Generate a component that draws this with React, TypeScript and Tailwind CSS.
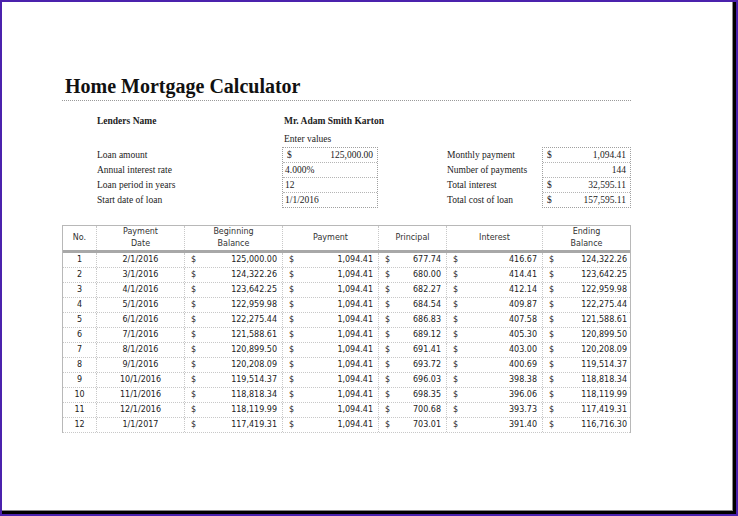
import React from "react";

const rows: [string, string, string, string, string, string, string][] = [
  ["1", "2/1/2016", "125,000.00", "1,094.41", "677.74", "416.67", "124,322.26"],
  ["2", "3/1/2016", "124,322.26", "1,094.41", "680.00", "414.41", "123,642.25"],
  ["3", "4/1/2016", "123,642.25", "1,094.41", "682.27", "412.14", "122,959.98"],
  ["4", "5/1/2016", "122,959.98", "1,094.41", "684.54", "409.87", "122,275.44"],
  ["5", "6/1/2016", "122,275.44", "1,094.41", "686.83", "407.58", "121,588.61"],
  ["6", "7/1/2016", "121,588.61", "1,094.41", "689.12", "405.30", "120,899.50"],
  ["7", "8/1/2016", "120,899.50", "1,094.41", "691.41", "403.00", "120,208.09"],
  ["8", "9/1/2016", "120,208.09", "1,094.41", "693.72", "400.69", "119,514.37"],
  ["9", "10/1/2016", "119,514.37", "1,094.41", "696.03", "398.38", "118,818.34"],
  ["10", "11/1/2016", "118,818.34", "1,094.41", "698.35", "396.06", "118,119.99"],
  ["11", "12/1/2016", "118,119.99", "1,094.41", "700.68", "393.73", "117,419.31"],
  ["12", "1/1/2017", "117,419.31", "1,094.41", "703.01", "391.40", "116,716.30"],
];

const leftLabels = ["Loan amount", "Annual interest rate", "Loan period in years", "Start date of loan"];
const rightLabels = ["Monthly payment", "Number of payments", "Total interest", "Total cost of loan"];

function Money({ v }: { v: string }) {
  return (
    <div className="flex h-full items-center justify-between pl-[6px] pr-[5px] border-r border-dotted border-[#c8c8c8]">
      <span>$</span>
      <span>{v}</span>
    </div>
  );
}

export default function App() {
  return (
    <div className="w-[738px] h-[516px] bg-[#4b22ad] p-[2px] flex">
      <div className="flex-1 bg-black pr-[3px] pb-[3px] flex">
        <div className="flex-1 bg-white border-r border-b border-[#8a8a8a] pt-[72px] pl-[60px]">
          <div className="w-[569px]">
            {/* Title */}
            <div className="border-b border-dotted border-[#9a9a9a] pb-[2px]">
              <div
                className="text-[20px] leading-[24px] font-bold text-[#111] pl-[3px]"
                style={{ fontFamily: '"Liberation Serif", serif' }}
              >
                Home Mortgage Calculator
              </div>
            </div>

            {/* Info section */}
            <div
              className="ml-[35px] mt-[13px] text-[9.5px] text-[#222]"
              style={{ fontFamily: '"Liberation Serif", serif' }}
            >
              <div className="flex h-[14px] items-center font-bold">
                <span className="w-[185px]">Lenders Name</span>
                <span className="pl-[2px]">Mr. Adam Smith Karton</span>
              </div>
              <div className="flex h-[14px] items-center mt-[4px]">
                <span className="w-[185px]" />
                <span className="pl-[2px]">Enter values</span>
              </div>
              <div className="flex mt-[1px]">
                <div className="w-[185px] pt-[1px]">
                  {leftLabels.map((l) => (
                    <div key={l} className="h-[15px] flex items-center">
                      {l}
                    </div>
                  ))}
                </div>
                <div className="w-[96px] border border-dotted border-[#a0a0a0]">
                  <div className="h-[15px] flex items-center justify-between px-[4px] border-b border-dotted border-[#b5b5b5]">
                    <span>$</span>
                    <span>125,000.00</span>
                  </div>
                  <div className="h-[15px] flex items-center px-[2px] border-b border-dotted border-[#b5b5b5]">
                    4.000%
                  </div>
                  <div className="h-[15px] flex items-center px-[2px] border-b border-dotted border-[#b5b5b5]">
                    12
                  </div>
                  <div className="h-[14px] flex items-center px-[2px]">1/1/2016</div>
                </div>
                <div className="w-[69px]" />
                <div className="w-[95px] pt-[1px]">
                  {rightLabels.map((l) => (
                    <div key={l} className="h-[15px] flex items-center">
                      {l}
                    </div>
                  ))}
                </div>
                <div className="w-[89px] border border-dotted border-[#a0a0a0]">
                  <div className="h-[15px] flex items-center justify-between px-[4px] border-b border-dotted border-[#b5b5b5]">
                    <span>$</span>
                    <span>1,094.41</span>
                  </div>
                  <div className="h-[15px] flex items-center justify-end px-[4px] border-b border-dotted border-[#b5b5b5]">
                    144
                  </div>
                  <div className="h-[15px] flex items-center justify-between px-[4px] border-b border-dotted border-[#b5b5b5]">
                    <span>$</span>
                    <span>32,595.11</span>
                  </div>
                  <div className="h-[14px] flex items-center justify-between px-[4px]">
                    <span>$</span>
                    <span>157,595.11</span>
                  </div>
                </div>
              </div>
            </div>

            {/* Table */}
            <div
              className="mt-[17px] border-t border-l border-r border-[#b8b8b8] text-[8px] text-[#222]"
              style={{ fontFamily: '"DejaVu Sans", sans-serif' }}
            >
              <div className="grid grid-cols-[34px_88px_98px_96px_68px_96px_87px] h-[27px] border-b-[3px] border-[#a8a8a8] text-[#333] leading-[12px] text-center">
                <div className="flex items-center justify-center border-r border-dotted border-[#c8c8c8]">No.</div>
                <div className="flex items-center justify-center border-r border-dotted border-[#c8c8c8]">
                  Payment
                  <br />
                  Date
                </div>
                <div className="flex items-center justify-center border-r border-dotted border-[#c8c8c8]">
                  Beginning
                  <br />
                  Balance
                </div>
                <div className="flex items-center justify-center border-r border-dotted border-[#c8c8c8]">Payment</div>
                <div className="flex items-center justify-center border-r border-dotted border-[#c8c8c8]">Principal</div>
                <div className="flex items-center justify-center border-r border-dotted border-[#c8c8c8]">Interest</div>
                <div className="flex items-center justify-center">
                  Ending
                  <br />
                  Balance
                </div>
              </div>
              {rows.map((r) => (
                <div
                  key={r[0]}
                  className="grid grid-cols-[34px_88px_98px_96px_68px_96px_87px] h-[15px] border-b border-dotted border-[#c8c8c8]"
                >
                  <div className="flex items-center justify-center border-r border-dotted border-[#c8c8c8]">{r[0]}</div>
                  <div className="flex items-center justify-center border-r border-dotted border-[#c8c8c8]">{r[1]}</div>
                  <Money v={r[2]} />
                  <Money v={r[3]} />
                  <Money v={r[4]} />
                  <Money v={r[5]} />
                  <div className="flex h-full items-center justify-between pl-[6px] pr-[3px]">
                    <span>$</span>
                    <span>{r[6]}</span>
                  </div>
                </div>
              ))}
            </div>
          </div>
        </div>
      </div>
    </div>
  );
}
